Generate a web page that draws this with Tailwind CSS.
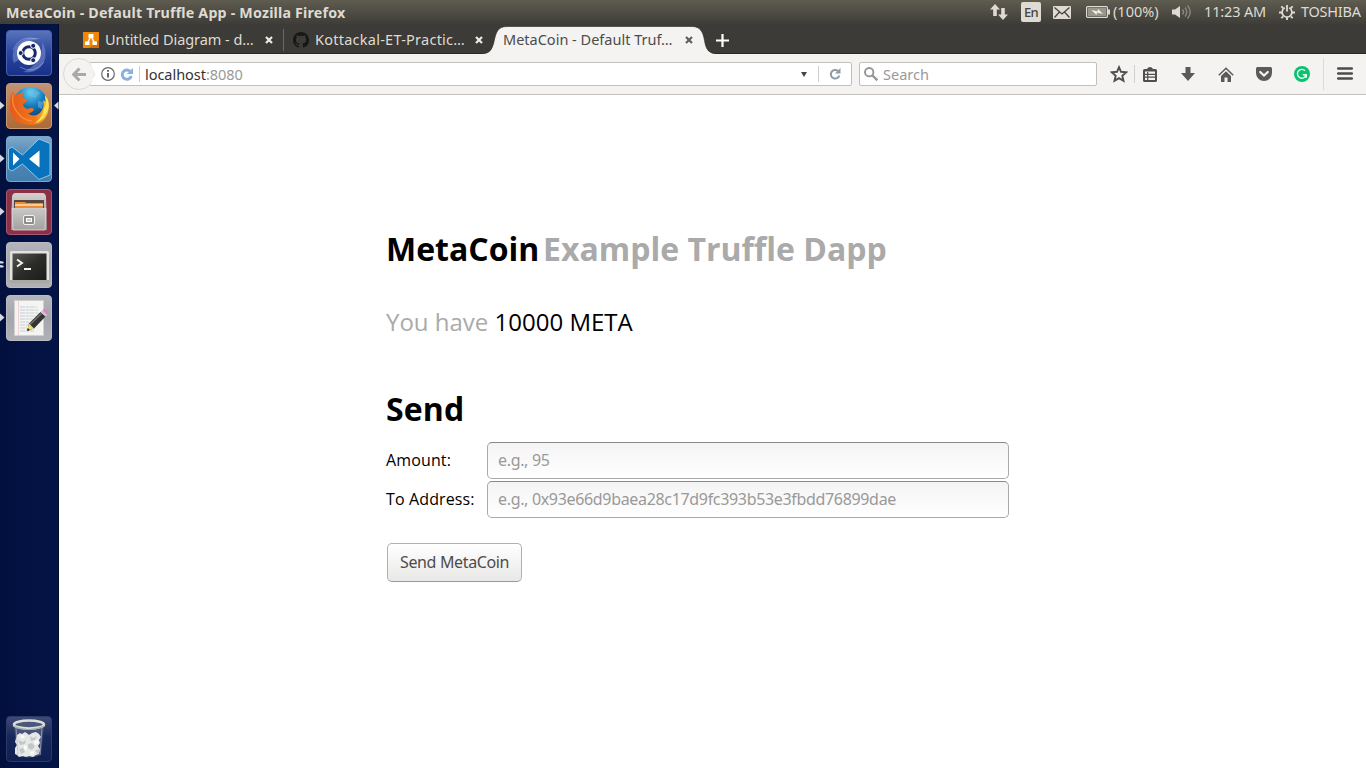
<!DOCTYPE html>
<html lang="en">
<head>
<meta charset="utf-8">
<title>MetaCoin - Default Truffle App</title>
<script src="https://cdn.jsdelivr.net/npm/@tailwindcss/browser@4"></script>
</head>
<body class="w-[1366px] h-[768px] overflow-hidden flex flex-col bg-white font-['Noto_Sans',sans-serif] whitespace-nowrap">

<!-- system panel -->
<header class="h-6 shrink-0 flex items-center justify-between pl-1.5 pr-[5px] bg-linear-to-b from-[#5f5c50] to-[#3e3d38] text-[#dfdbd2] text-[14.5px]">
  <div class="font-bold text-[14.25px] w-[342px] tracking-[0.19px] pt-px">MetaCoin - Default Truffle App - Mozilla Firefox</div>
  <div class="flex items-center h-6">
    <svg class="w-[18px] h-4 mr-[13px]" viewBox="0 0 18 16" fill="#dfdbd2"><path d="M5 0 10 5.5H6.8V12H3.2V5.5H0zM13 16 8 10.5h3.2V4h3.6v6.500H18z"/></svg>
    <div class="w-5 h-5 mr-3 rounded-xs bg-[#dfdbd2] text-[#46443e] text-[13px] font-medium leading-[21px] text-center tracking-[-0.6px]">En</div>
    <svg class="w-[18px] h-[13px] mr-[15px]" viewBox="0 0 18 13"><rect width="18" height="13" rx="1" fill="#dfdbd2"/><path d="M1.500 1.500 9 8l7.500-6.500M1.500 11.500 6.500 6M16.500 11.500l-5-5.500" fill="none" stroke="#46443e" stroke-width="1.300"/></svg>
    <svg class="w-6 h-3 mr-[3px]" viewBox="0 0 24 12"><rect x=".6" y=".6" width="20.800" height="10.800" rx="1" fill="none" stroke="#dfdbd2" stroke-width="1.200"/><rect x="2" y="2" width="18" height="8" fill="#99968c"/><rect x="22" y="3.500" width="2" height="5" fill="#dfdbd2"/><path d="m5.500 4 6 1.500.5-2.500 5 5-6-1.500-.5 2.500z" fill="#f5f2ea"/></svg>
    <div class="w-[46px] mr-[13px]">(100%)</div>
    <svg class="w-5 h-4 mr-[12px]" viewBox="0 0 20 16"><path d="M0 5.500h3L8 2v12l-5-3.500H0z" fill="#dfdbd2"/><g fill="none" stroke="#89867c" stroke-width="1.500"><path d="M10.500 5.500q2 2.500 0 5M13 3.500q3.500 4.500 0 9M15.500 1.500q5.500 6.500 0 13"/></g></svg>
    <div class="w-[62px] mr-[13px] tracking-[-0.15px]">11:23 AM</div>
    <svg class="w-4 h-4 mr-1.5" viewBox="0 0 16 16" fill="none" stroke="#dfdbd2"><path d="M5.800 3.800a4.900 4.900 0 1 0 4.400 0" stroke-width="1.700"/><path d="M8 1v6.500" stroke-width="1.800"/><path d="M2.300 2.300 4.200 4.200M13.700 2.300l-1.900 1.900M0 8.500h3M13 8.500h3M2.300 14.200l1.900-1.900M13.700 14.200l-1.900-1.900M8 13v3" stroke-width="1.900"/></svg>
    <div class="w-[60px] tracking-[-0.25px]">TOSHIBA</div>
  </div>
</header>

<div class="flex flex-1 min-h-0">
  <!-- launcher -->
  <nav class="w-[59px] shrink-0 bg-linear-to-r from-[#02103f] to-[#041446] border-r border-[#020a2b] pt-1.5 pb-1.5 pl-1.5 flex flex-col gap-[7px] relative">
    <svg class="size-[46px] shrink-0" viewBox="0 0 46 46">
      <defs><linearGradient id="ub" x2="0" y2="1"><stop stop-color="#5b74bb"/><stop offset=".5" stop-color="#2a46a0"/><stop offset="1" stop-color="#183088"/></linearGradient></defs>
      <rect x=".5" y=".5" width="45" height="45" rx="3.500" fill="url(#ub)" stroke="#4560b4"/>
      <path d="M8 33C2 18 18 3 36 9 25 8 12 14 14 29zM17 42C34 45 46 29 36 12c1 12-3 23-19 30z" fill="#9cafe0" opacity=".4"/>
      <path d="M7 20Q14 4 31 9M14 37q13 8 24-5" stroke="#b9c6ea" fill="none" opacity=".45"/>
      <circle cx="23" cy="23" r="12" fill="#fff"/><circle cx="23" cy="23" r="6.300" fill="none" stroke="#152968" stroke-width="3"/>
      <g fill="#152968" stroke="#fff" stroke-width="1"><circle cx="14.700" cy="23" r="2.500"/><circle cx="27.200" cy="15.800" r="2.500"/><circle cx="27.200" cy="30.200" r="2.500"/></g>
    </svg>
    <svg class="size-[46px] shrink-0" viewBox="0 0 46 46">
      <defs><linearGradient id="ft" x2="0" y2="1"><stop stop-color="#c19475"/><stop offset="1" stop-color="#ad6a35"/></linearGradient><radialGradient id="fg" cx=".5" cy=".15" r=".8"><stop stop-color="#65d3f4"/><stop offset=".5" stop-color="#1679bc"/><stop offset="1" stop-color="#0b376f"/></radialGradient><linearGradient id="ff" x1="0" x2="1"><stop stop-color="#e6581c"/><stop offset=".65" stop-color="#f0781b"/><stop offset="1" stop-color="#fbd437"/></linearGradient></defs>
      <rect x=".5" y=".5" width="45" height="45" rx="3.500" fill="url(#ft)" stroke="#c99a78"/>
      <circle cx="24.500" cy="21.500" r="17.500" fill="url(#fg)"/>
      <path d="M22 9q7-4 12 1l-5 5-5-2zM32 18l5 1-1 7-4-2z" fill="#6fbde2" opacity=".55"/>
      <path d="M6 9 10 12Q14 9 19 10q-3 2-3 5l5 1q1 2-4 5 0 4 5 5 3-2 6 0-1 4-6 4 5 5 12 0 5-5 3-13l3 2-1-7q6 7 3 17-4 13-17 13Q6 41 4 27 3 18 6 9z" fill="url(#ff)"/>
      <path d="M39 12q6 8 2 17-4 9-12 11 8-6 9-14l2-5z" fill="#fce35a"/>
      <path d="M7 11q-2 12 5 19 5 7 14 8" stroke="#f9923a" stroke-width="1.500" fill="none" opacity=".8"/>
    </svg>
    <svg class="size-[46px] shrink-0" viewBox="0 0 46 46">
      <defs><linearGradient id="vs" x2="0" y2="1"><stop stop-color="#7fa9c9"/><stop offset=".45" stop-color="#4e87b3"/><stop offset="1" stop-color="#427eae"/></linearGradient></defs>
      <rect x=".5" y=".5" width="45" height="45" rx="3.500" fill="url(#vs)" stroke="#78a7cb"/>
      <path d="M33 3 44 7.500V39L33 43.500 16.500 28 6 35 2.500 33V13L6 11l10.500 8z" fill="#0972bd" stroke="#9dccec" stroke-width=".9"/>
      <path d="M33.500 14.500v17L23 23zM7 16.500v13l6.500-6.500z" fill="#fff"/>
    </svg>
    <svg class="size-[46px] shrink-0" viewBox="0 0 46 46">
      <defs><linearGradient id="fd" x2="0" y2="1"><stop stop-color="#d1d0ce"/><stop offset="1" stop-color="#929190"/></linearGradient><linearGradient id="fr" x2="0" y2="1"><stop stop-color="#c9c8c6"/><stop offset="1" stop-color="#a2a19f"/></linearGradient></defs>
      <rect x=".5" y=".5" width="45" height="45" rx="3.500" fill="#8b3046" stroke="#a6596b"/>
      <path d="M9 4h28q2 0 3 3l1 34H5L6 7q1-3 3-3z" fill="url(#fd)"/>
      <rect x="8" y="11" width="30" height="9" fill="#56463b"/><path d="M9 13h10l1 1h17v5H9z" fill="#ed8a35"/><path d="M9 16h28" stroke="#ffe1ae" stroke-width="1.500"/>
      <path d="M6 19.500h34L39 41H7z" fill="url(#fr)" stroke="#deddda" stroke-width=".8"/>
      <rect x="17.500" y="26.500" width="11" height="9" rx="1.500" fill="#8e8d8a" stroke="#f2f2f0"/><rect x="20.500" y="29.500" width="5" height="3" fill="#ccc" stroke="#fff"/>
    </svg>
    <svg class="size-[46px] shrink-0" viewBox="0 0 46 46">
      <defs><linearGradient id="sl" x2="0" y2="1"><stop stop-color="#b4b4bb"/><stop offset=".5" stop-color="#a5a5ad"/><stop offset="1" stop-color="#b0b0b7"/></linearGradient><linearGradient id="tm" x2="1" y2="1"><stop stop-color="#555551"/><stop offset=".5" stop-color="#2c2c29"/><stop offset="1" stop-color="#1b1b19"/></linearGradient></defs>
      <rect x=".5" y=".5" width="45" height="45" rx="3.500" fill="url(#sl)" stroke="#bbbbc3"/>
      <rect x="4" y="9" width="39" height="31" rx="1.500" fill="#e4e4df"/><path d="M4 38h39v3H4z" fill="#a9a9a4"/>
      <rect x="6.500" y="11.500" width="34" height="26.500" fill="url(#tm)"/>
      <path d="m11 17.500 5 3.500-5 3.500M18 27h7" fill="none" stroke="#f5f5f2" stroke-width="1.900"/>
    </svg>
    <svg class="size-[46px] shrink-0" viewBox="0 0 46 46">
      <rect x=".5" y=".5" width="45" height="45" rx="3.500" fill="url(#sl)" stroke="#bbbbc3"/>
      <rect x="8.500" y="5.500" width="29" height="35" fill="#f4f4f2" stroke="#d0d0d0"/>
      <path d="M14 12h17M14 15h19M14 18h18M14 21h16M14 24h13M14 27h9M14 30h8M14 33h7M14 36h14" stroke="#c3c9d0" stroke-width=".9" stroke-dasharray="5 .8 3 .7"/>
      <path d="M12.500 6v34" stroke="#ecaeb0" stroke-width=".7" opacity=".7"/>
      <path d="m21 36 2-7.500L34.500 17l5 4.500L28 33.500z" fill="#343432"/><path d="m24 29.500 11.500-11" stroke="#73736f" stroke-width="1.500"/>
      <path d="m34.500 17 2-1.800 5 4.500-2 1.800z" fill="#c7c7c7"/><path d="m36.500 15.200 1-1q2-1 4.300 2 .7 1.500-.3 3.500z" fill="#db83c6"/>
      <path d="m21 36 2-7.500 5 5z" fill="#eadd75"/><path d="m21 36 .8-3 2.200 2z" fill="#222"/>
    </svg>
    <svg class="size-[46px] shrink-0 mt-auto" viewBox="0 0 46 46">
      <defs><linearGradient id="tr" x2="0" y2="1"><stop stop-color="#3f4b78"/><stop offset=".45" stop-color="#18275a"/><stop offset="1" stop-color="#101f52"/></linearGradient></defs>
      <rect x=".5" y=".5" width="45" height="45" rx="3.500" fill="url(#tr)" stroke="#2c3966"/>
      <path d="m8 8 3 31q11 5 24 0l3-31z" fill="#65718f" opacity=".55"/>
      <path d="m11 19 3-2 2 1 3-2 3 2 1 1 3-2 4-1 3 2 2 3-2 3 1 3-2 3 2 3-1 5-3 1-3 2-4-1-3 1-3-1-4 1-2-2-2-1 0-6 2-3-2-3z" fill="#e6e8e8"/>
      <g fill="#c3c7c9"><path d="m12 24 5 2 3-2-1 4-5 1zM24 20l3 2 4-2-2 4-4 1zM22 28l4-1 3 3-3 4-4-2zM13 33l4-1 2 4-4 2zM29 35l3-2 2 2-2 3z"/></g>
      <path d="m14 20 3-1 2 2-3 2zM28 25l4-1 1 3-4 2zM18 29l3 1v4l-3-1zM24 36l4-1 0 3-3 1z" fill="#fafafa"/>
      <path d="m10 11 2 28M36 11l-2 28" stroke="#aeb6c5" stroke-width=".9" opacity=".7"/>
      <ellipse cx="23" cy="8.500" rx="15" ry="4" fill="#4b587d" stroke="#dcdeda" stroke-width="2.600"/>
      <path d="M7 10q15 7 32 0" stroke="#a9adab" stroke-width="1.200" fill="none"/>
    </svg>
    <!-- running and focus markers -->
    <svg class="absolute left-0 top-0 w-[59px] h-[330px]" viewBox="0 0 59 330" fill="#d5d8df"><path d="M0 77.500 4.500 81.500 0 85.500zM58.500 77.500 54 81.500l4.500 4zM0 130.500l4.500 4-4.500 4zM0 183.500l4.500 4-4.500 4zM0 289.500l4.500 4-4.500 4zM0 237l3 .5 1 1-1 1H0zM0 241l3 .5 1 1-1 1H0z"/></svg>
  </nav>

  <div class="flex-1 flex flex-col min-w-0">
    <!-- tabs -->
    <div class="h-[30px] shrink-0 bg-[#3c3b37] border-b border-[#282825] text-[#dfdbd2] text-[14.5px] flex items-center pt-[3px] relative">
      <div class="w-[225px] pl-6 flex items-center border-r border-[#6b6963] h-[22px]">
        <svg class="size-4 mr-1.5" viewBox="0 0 16 16"><rect width="16" height="16" fill="#f08705"/><path d="M16 8v8H6z" fill="#d86c00"/><path d="M8 4 4.500 11M8 4l3.500 7" stroke="#fff" stroke-width="1.500"/><path d="M5.500 2h5v4h-5zM2 9.500h4.500V13H2zM9.500 9.500H14V13H9.500z" fill="#fff"/></svg>
        <span class="w-[160px] tracking-[-0.05px]">Untitled Diagram - d…</span>
        <svg class="size-2" viewBox="0 0 8 8"><path d="m1 1 6 6M7 1 1 7" stroke="#eeebe4" stroke-width="2.200"/></svg>
      </div>
      <div class="w-[210px] pl-[9px] flex items-center h-[22px]">
        <svg class="size-4 mr-1.5" viewBox="0 0 16 16" fill="#171717"><path d="M8 0C3.580 0 0 3.580 0 8c0 3.540 2.290 6.530 5.470 7.590.4.070.55-.17.55-.38 0-.19-.01-.82-.01-1.490-2.010.37-2.530-.49-2.690-.94-.09-.23-.48-.94-.82-1.130-.28-.15-.68-.52-.01-.53.63-.01 1.080.58 1.230.82.72 1.210 1.870.87 2.330.66.070-.52.28-.87.51-1.070-1.780-.2-3.640-.89-3.640-3.950 0-.87.31-1.590.82-2.150-.08-.2-.36-1.020.08-2.120 0 0 .67-.21 2.200.82.64-.18 1.320-.27 2-.27s1.360.09 2 .27c1.530-1.040 2.200-.82 2.200-.82.44 1.100.16 1.920.08 2.120.51.56.82 1.270.82 2.150 0 3.070-1.870 3.750-3.650 3.950.29.25.54.73.54 1.480 0 1.070-.01 1.930-.01 2.200 0 .21.15.46.55.38A8.010 8.010 0 0 0 16 8c0-4.420-3.580-8-8-8z"/></svg>
        <span class="w-[160px] tracking-[0.25px]">Kottackal-ET-Practic…</span>
        <svg class="size-2" viewBox="0 0 8 8"><path d="m1 1 6 6M7 1 1 7" stroke="#eeebe4" stroke-width="2.200"/></svg>
      </div>
      <div class="w-[222px] pl-[9px] flex items-center text-[#4c4c4c]">
        <svg class="absolute left-[422px] top-0.5 w-[238px] h-7" viewBox="0 0 238 28"><path d="M0 28c9 0 11-4 13-12C15 6 17 .5 26 .5H211c8 0 11 5 12.500 14 1.500 9 4 13.500 13 13.500z" fill="#f4f3f1"/><path d="M0 27.500c9 0 11-4 13-12C15 6 17 .5 26 .5H211c8 0 11 5 12.500 14 1.500 9 4 13 13 13" fill="none" stroke="#282825" stroke-opacity=".6"/></svg>
        <span class="relative w-[182px]">MetaCoin - Default Truf…</span>
        <svg class="relative size-2" viewBox="0 0 8 8"><path d="m1 1 6 6M7 1 1 7" stroke="#5f5f5f" stroke-width="2.200"/></svg>
      </div>
      <svg class="size-[13px]" viewBox="0 0 13 13"><path d="M6.500 0v13M0 6.500h13" stroke="#fff" stroke-width="2.200"/></svg>
    </div>

    <!-- navigation toolbar -->
    <div class="h-[41px] shrink-0 bg-[#f4f3f1] border-b border-[#c6c3be] flex items-center text-[14.5px] relative">
      <div class="absolute left-1 top-1 size-8 rounded-full border border-[#dbd9d6] bg-[#f4f3f1] flex items-center justify-center">
        <svg class="w-[14px] h-[15px]" viewBox="0 0 14 15"><path d="M7.500 1.500 1.500 7.500l6 6M2 7.500h12" fill="none" stroke="#aaa9a7" stroke-width="3"/></svg>
      </div>
      <div class="ml-[30px] w-[763px] h-6 border border-[#c3c0bb] rounded-r-xs bg-white flex items-center [clip-path:polygon(1px_0,100%_0,100%_100%,1px_100%,6px_50%)]">
        <svg class="size-[14px] ml-[11px] mr-[5px]" viewBox="0 0 14 14"><circle cx="7" cy="7" r="6.300" fill="none" stroke="#666" stroke-width="1.200"/><path d="M7 6v4.500M7 3v1.700" stroke="#555" stroke-width="1.800"/></svg>
        <svg class="size-[13px]" viewBox="0 0 13 13"><path d="M10 3.200A4.600 4.600 0 1 0 11.300 8" fill="none" stroke="#86b2dc" stroke-width="2.900"/><path d="M13 0v6H6.800z" fill="#86b2dc"/></svg>
        <div class="h-4 w-px bg-[#cfcfcf] ml-1.5 mr-[5px]"></div>
        <span class="w-[656px] pt-px text-[#333] tracking-[-0.04px]">localhost<span class="text-[#999]">:8080</span></span>
        <svg class="w-1.5 h-[5px]" viewBox="0 0 6 5"><path d="M0 0h6L3 5z" fill="#444"/></svg>
        <div class="h-4 w-px bg-[#cfcfcf] ml-[11px] mr-2.5"></div>
        <svg class="size-3" viewBox="0 0 12 12"><path d="M9 3A4.300 4.300 0 1 0 10.300 7.500" fill="none" stroke="#8c9aa6" stroke-width="2"/><path d="M11.500 0v5.500H6z" fill="#8c9aa6"/></svg>
      </div>
      <div class="ml-[7px] w-[238px] h-6 border border-[#c3c0bb] rounded-xs bg-white flex items-center pl-1">
        <svg class="size-[14px] mr-[5px]" viewBox="0 0 14 14" fill="none" stroke="#949494"><circle cx="5.200" cy="5.200" r="4.200" stroke-width="1.900"/><path d="m8.300 8.300 5 5" stroke-width="2.300"/></svg>
        <span class="text-[#999] pt-px">Search</span>
      </div>
      <svg class="ml-[13px] size-[18px] shrink-0" viewBox="0 0 18 18"><path d="m9 2.200 2 4.600 5.200.5-3.900 3.500 1.200 5.100L9 13.200l-4.500 2.700 1.200-5.100-3.900-3.500L7 6.800z" fill="none" stroke="#4f4f4f" stroke-width="1.900"/></svg>
      <div class="h-[18px] w-px bg-[#d2d0cd] ml-1.5 mr-2"></div>
      <svg class="w-[14px] h-[15px]" viewBox="0 0 14 15"><path d="M4 2q1-2 3-2t3 2h2.500Q14 2 14 3.500v10Q14 15 12.500 15h-11Q0 15 0 13.500v-10Q0 2 1.500 2z" fill="#4f4f4f"/><path d="M2 4.500h10V13H2z" fill="#f4f3f1"/><path d="M2 7.300h10M2 10.200h10M4.700 5v8" stroke="#4f4f4f" stroke-width="1.200"/></svg>
      <svg class="ml-6 w-[14px] h-[14px]" viewBox="0 0 14 14"><path d="M4.500 0h5v6H14l-7 8-7-8h4.500z" fill="#5a5a5a"/></svg>
      <svg class="ml-[23px] w-4 h-[15px]" viewBox="0 0 16 15"><path d="M.8 8.200 8 1.200l7.200 7" fill="none" stroke="#5a5a5a" stroke-width="1.500"/><path d="m3 9 5-4.800L13 9v6H9.500v-4.500h-3V15H3z" fill="#5a5a5a"/></svg>
      <svg class="ml-[22px] w-4 h-[14px]" viewBox="0 0 16 14"><path d="M1.500 0h13Q16 0 16 1.500V6a8 8 0 0 1-16 0V1.500Q0 0 1.500 0z" fill="#5a5a5a"/><path d="m4.200 5 3.800 3.600L11.800 5" fill="none" stroke="#f4f3f1" stroke-width="2.200" stroke-linecap="round"/></svg>
      <svg class="ml-[22px] size-4" viewBox="0 0 16 16"><circle cx="8" cy="8" r="8" fill="#0dc26e"/><path d="M11 4.700A4.400 4.400 0 1 0 12 9.200M8.800 8.800h3.500v3" fill="none" stroke="#e7fff3" stroke-width="1.400"/></svg>
      <div class="w-px h-8 bg-[#dedcd9] ml-[13px] mr-[13px]"></div>
      <svg class="w-4 h-[13px] mb-px" viewBox="0 0 16 13"><path d="M1.200 1.500h13.600M1.200 6.500h13.600M1.200 11.500h13.600" stroke="#4c4c4c" stroke-width="2.600" stroke-linecap="round"/></svg>
    </div>

    <!-- page -->
    <main class="flex-1 bg-white pl-[327px] pt-[132px] font-['Open_Sans',sans-serif] text-black">
      <h1 class="text-[32px] leading-[44px] font-bold flex"><span class="w-[157px]">MetaCoin</span><span class="text-[#aaa]">Example Truffle Dapp</span></h1>
      <h2 class="mt-[34px] text-2xl leading-[34px] text-[#aaa]">You have <span class="text-black">10000 META</span></h2>
      <h1 class="mt-[48px] text-[32px] leading-[44px] font-bold tracking-[0.15px]">Send</h1>
      <div class="mt-[11px] flex items-center">
        <label class="w-[101px] pb-0.5 tracking-[0.13px]">Amount:</label>
        <div class="w-[522px] h-[37px] rounded-[5px] border border-[#aaa] border-t-[#888] bg-linear-to-b from-[#f4f4f4] to-white px-2.5 leading-[35px] text-[#999] font-['Noto_Sans',sans-serif] tracking-[-0.33px]">e.g., 95</div>
      </div>
      <div class="mt-0.5 flex items-center">
        <label class="w-[101px] pb-0.5 tracking-[0.13px]">To Address:</label>
        <div class="w-[522px] h-[37px] rounded-[5px] border border-[#aaa] border-t-[#888] bg-linear-to-b from-[#f4f4f4] to-white px-2.5 leading-[35px] text-[#999] font-['Noto_Sans',sans-serif] tracking-[-0.33px]">e.g., 0x93e66d9baea28c17d9fc393b53e3fbdd76899dae</div>
      </div>
      <button class="mt-[25px] ml-px w-[135px] h-[39px] rounded-[5px] border border-[#b0b0b0] border-b-[#999] bg-linear-to-b from-white to-[#e9e8e7] px-3 pb-px text-left text-[#4c4c4c] font-['Noto_Sans',sans-serif] tracking-[-0.36px]">Send MetaCoin</button>
    </main>
  </div>
</div>
</body>
</html>
